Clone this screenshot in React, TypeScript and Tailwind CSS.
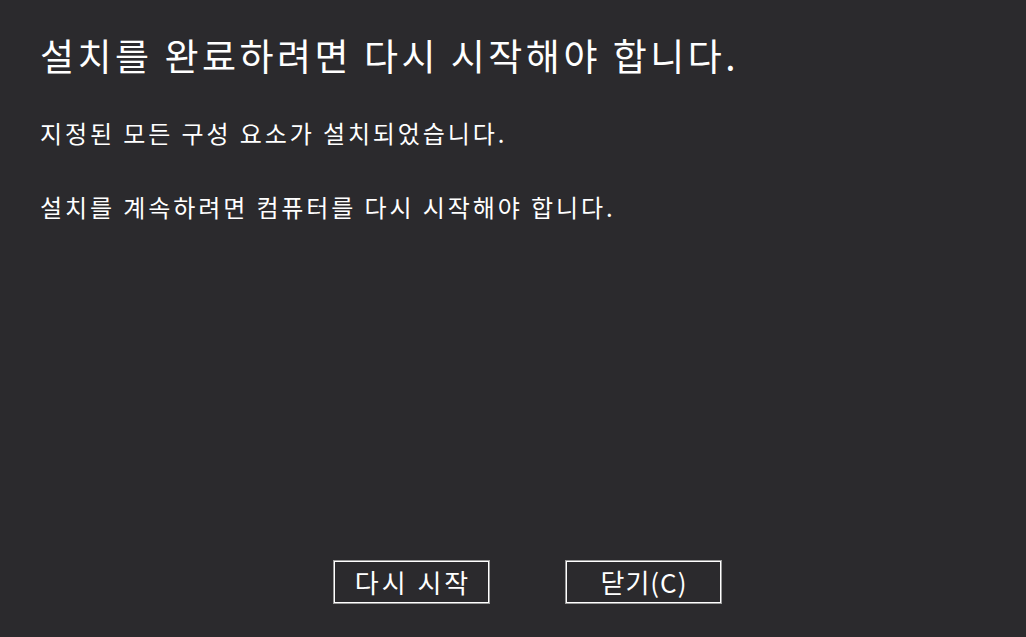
export default function App() {
  return (
    <div
      className="w-[1026px] h-[637px] bg-[#2b2a2d] text-white flex flex-col overflow-hidden"
      style={{ fontFamily: '"Noto Sans CJK KR", "Noto Sans", sans-serif' }}
    >
      <div className="pl-[40px] pt-[30px]">
        <h1 className="text-[37px] leading-[50px] font-normal tracking-[3.5px]">설치를 완료하려면 다시 시작해야 합니다.</h1>
        <p className="mt-[38px] text-[24px] leading-[30px] tracking-[2.9px]">지정된 모든 구성 요소가 설치되었습니다.</p>
        <p className="mt-[44px] text-[24px] leading-[30px] tracking-[2.9px]">설치를 계속하려면 컴퓨터를 다시 시작해야 합니다.</p>
      </div>
      <div className="flex-1" />
      <div className="flex pl-[333px] gap-[75px] pb-[33px]">
        <button className="w-[157px] h-[44px] border border-[#9b9b9b] shadow-[inset_0_0_0_1px_#ffffff] text-[26px] leading-none tracking-[3px] pl-[3px] text-white flex items-center justify-center">
          다시 시작
        </button>
        <button className="w-[157px] h-[44px] border border-[#9b9b9b] shadow-[inset_0_0_0_1px_#ffffff] text-[26px] leading-none tracking-[1px] pl-[1px] text-white flex items-center justify-center">
          닫기(C)
        </button>
      </div>
    </div>
  );
}
